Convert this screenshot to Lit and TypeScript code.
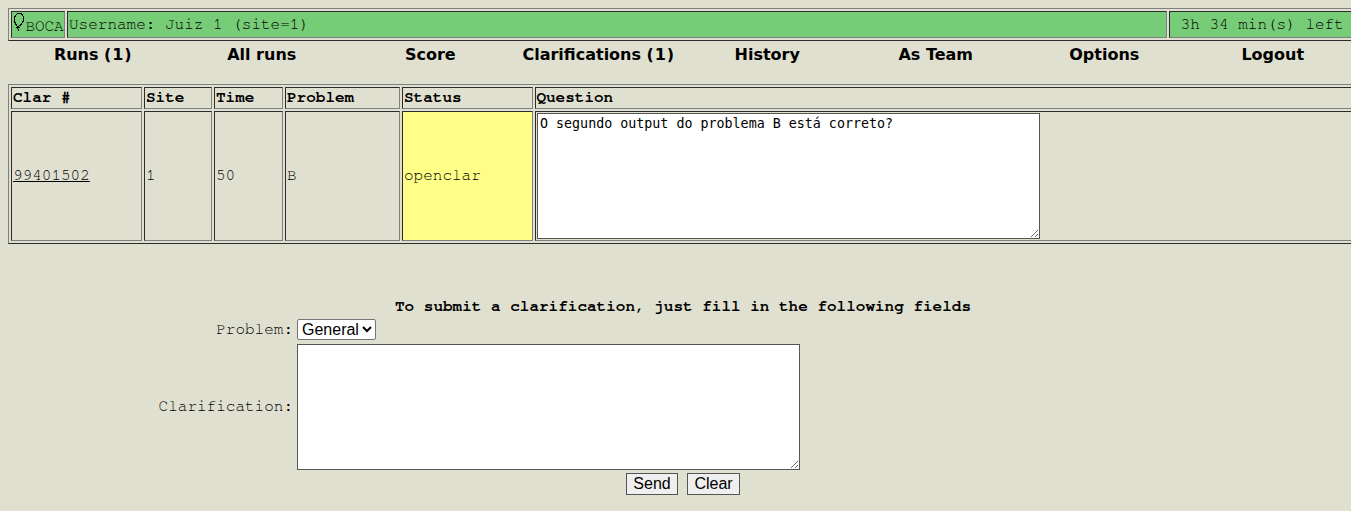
import { LitElement, html, css } from "lit";
import { customElement } from "lit/decorators.js";

@customElement("app-root")
export class AppRoot extends LitElement {
  static styles = css`
    :host {
      display: block;
      width: 100%;
      height: 511px;
      overflow: hidden;
      background: #e0e0d0;
      color: #000;
      font: 16px/18px "Courier 10 Pitch", "Nimbus Mono PS", FreeMono, "Courier New", "Liberation Mono", monospace;
    }
    .page { width: 1350px; padding: 8px; }
    .frame {
      display: grid;
      gap: 2px;
      padding: 2px;
      border: 1px solid;
      border-color: #808080 #2c2c2c #2c2c2c #808080;
    }
    .bar { grid-template-columns: 54px 1100px 1fr; grid-template-rows: 27px; }
    .clars {
      grid-template-columns: 131px 68px 69px 115px 131px 1fr;
      grid-template-rows: 22px 130px;
    }
    .cell {
      box-sizing: border-box;
      display: flex;
      align-items: center;
      padding: 1px 1px 3px;
      border: 1px solid;
      border-color: #2c2c2c #808080 #808080 #2c2c2c;
      white-space: pre;
    }
    .green { background: #77cc77; }
    .yellow { background: #ffff88; }
    .head { font-weight: bold; }
    .head:nth-child(6) { padding-left: 0.4px; }
    .field { padding: 1px; }
    .balloon { flex: none; align-self: flex-start; margin-right: 0.6px; }
    .brand { padding-top: 5px; letter-spacing: -0.1px; }
    .time { padding-left: 10.6px; }
    .nav {
      display: grid;
      grid-template-columns: repeat(8, 1fr);
      height: 43px;
      box-sizing: border-box;
      padding: 4px 1px 0;
      text-align: center;
      font: bold 16px/20px Verdana, "DejaVu Sans", sans-serif;
    }
    .count { letter-spacing: 0.9px; }
    .link { text-decoration: underline; }
    textarea {
      display: block;
      box-sizing: border-box;
      width: 503px;
      height: 126px;
      margin: 0;
      padding: 2px;
      border: 1px solid #555;
      border-radius: 0;
      background: #fff;
      color: #000;
      font: 13.333px "DejaVu Sans Mono", monospace;
      overflow: auto;
      resize: both;
    }
    .title { margin-top: 53px; text-align: center; font-weight: bold; }
    .form {
      display: grid;
      grid-template-columns: 285px 1fr;
      column-gap: 4px;
      row-gap: 4px;
      align-items: center;
      margin-top: 4px;
    }
    .label { text-align: right; padding-bottom: 2px; }
    select {
      display: block;
      box-sizing: border-box;
      width: 79px;
      height: 21px;
      margin: 0;
      padding: 0;
      border: 1px solid #767676;
      border-radius: 2px;
      background: #fff;
      color: #000;
      font: 16px "Liberation Sans", Arial, sans-serif;
    }
    .actions { display: flex; justify-content: center; gap: 9px; margin-top: 3px; }
    button {
      box-sizing: border-box;
      height: 22px;
      width: 52px;
      padding: 0;
      border: 1px solid #555;
      border-radius: 0;
      background: #efefef;
      color: #000;
      font: 16px/18px "Liberation Sans", Arial, sans-serif;
    }
    .wide { width: 53px; }
  `;

  render() {
    const nav: [string, string?][] = [
      ["Runs", "(1)"], ["All runs"], ["Score"], ["Clarifications", "(1)"],
      ["History"], ["As Team"], ["Options"], ["Logout"],
    ];
    const heads = ["Clar #", "Site", "Time", "Problem", "Status", "Question"];
    return html`<div class="page">
      <div class="frame bar">
        <div class="cell green"><svg class="balloon" width="12" height="19" viewBox="0 0 12 19" fill="none" stroke="#000" stroke-width="1.1" shape-rendering="crispEdges">
            <path d="M5.5 14.5L3.5 12.5L1.5 8.5V4L3.5 1.3L5.5.5H7.5L9.5 1.5L10.5 4V8L8.5 11L5.5 13.5L4 14.5H7M4.5 15L6 17.5" />
          </svg><span class="brand">BOCA</span></div>
        <div class="cell green">Username: Juiz 1 (site=1)</div>
        <div class="cell green time">3h 34 min(s) left</div>
      </div>
      <div class="nav">${nav.map(([n, c]) => html`<span>${n}${c ? html` <span class="count">${c}</span>` : ""}</span>`)}</div>
      <div class="frame clars">
        ${heads.map((h) => html`<div class="cell head">${h}</div>`)}
        <div class="cell"><span class="link">99401502</span></div>
        <div class="cell">1</div>
        <div class="cell">50</div>
        <div class="cell">B</div>
        <div class="cell yellow">openclar</div>
        <div class="cell field"><textarea readonly .value=${"O segundo output do problema B está correto?"}></textarea></div>
      </div>
      <div class="title">To submit a clarification, just fill in the following fields</div>
      <div class="form">
        <span class="label">Problem:</span>
        <select><option>General</option></select>
        <span class="label">Clarification:</span>
        <textarea></textarea>
      </div>
      <div class="actions"><button>Send</button><button class="wide">Clear</button></div>
    </div>`;
  }
}
